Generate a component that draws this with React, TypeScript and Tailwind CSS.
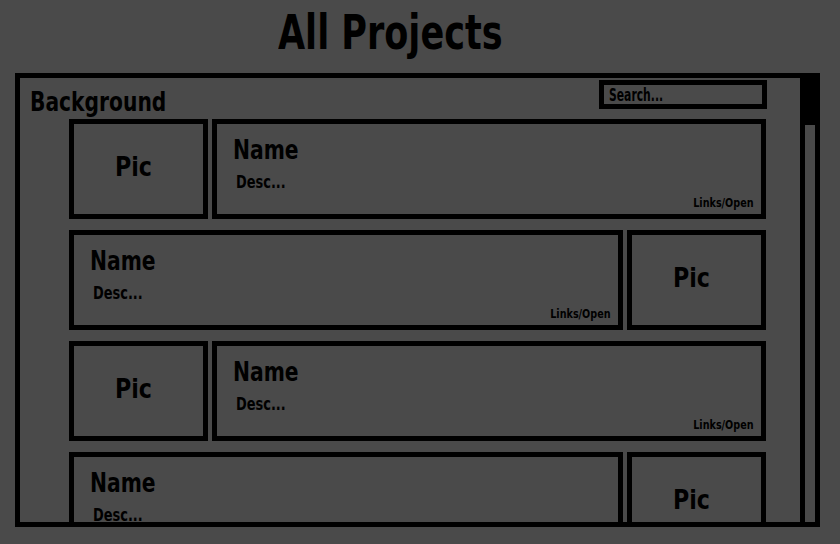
const font = "font-['DejaVu_Sans',sans-serif]";

const PicBox = () => (
  <div className="w-[139px] h-[100px] shrink-0 border-[5px] border-black flex items-center justify-center pb-[5px] pr-[10px]">
    <span className="inline-block text-[27px] font-bold leading-none text-black [transform:scaleX(0.82)]">Pic</span>
  </div>
);

const InfoBox = () => (
  <div className="w-[554px] h-[100px] shrink-0 border-[5px] border-black relative pl-[16px] pt-[13px]">
    <div className="text-[26px] font-bold leading-none text-black origin-left [transform:scaleX(0.78)]">Name</div>
    <div className="text-[18px] font-bold leading-none text-black mt-[10px] ml-[3px] origin-left [transform:scaleX(0.72)]">Desc...</div>
    <div className="absolute right-[7px] bottom-[5px] text-[13px] font-bold leading-none text-black origin-right [transform:scaleX(0.74)]">Links/Open</div>
  </div>
);

const ProjectRow = ({ flip }: { flip?: boolean }) => (
  <div className="flex gap-[4px]">
    {flip ? <><InfoBox /><PicBox /></> : <><PicBox /><InfoBox /></>}
  </div>
);

const App = () => {
  return <main className={`w-[840px] h-[544px] bg-[#4a4a4a] overflow-hidden ${font}`}>
    <div className="h-[73px] pl-[278px] pt-[8px]">
      <h1 className="text-[48px] font-bold leading-none text-black origin-left [transform:scaleX(0.73)]">All Projects</h1>
    </div>
    <div className="ml-[15px] w-[805px] h-[454px] border-[5px] border-black flex">
      <div className="flex-1 overflow-hidden">
        <div className="h-[41px] flex">
          <div className="pl-[10px] pt-[10px]">
            <div className="text-[27px] font-bold leading-none text-black origin-left [transform:scaleX(0.75)]">Background</div>
          </div>
          <div className="ml-auto mr-[33px] mt-[2px] w-[168px] h-[29px] border-[5px] border-black pl-[5px] flex items-center">
            <span className="inline-block text-[18px] font-bold leading-none text-black origin-left [transform:scaleX(0.6)]">Search...</span>
          </div>
        </div>
        <div className="pl-[49px] flex flex-col gap-[11px]">
          <ProjectRow />
          <ProjectRow flip />
          <ProjectRow />
          <ProjectRow flip />
        </div>
      </div>
      <div className="w-[15px] h-full border-l-[5px] border-black">
        <div className="h-[47px] bg-black" />
      </div>
    </div>
  </main>;
};
export default App;
